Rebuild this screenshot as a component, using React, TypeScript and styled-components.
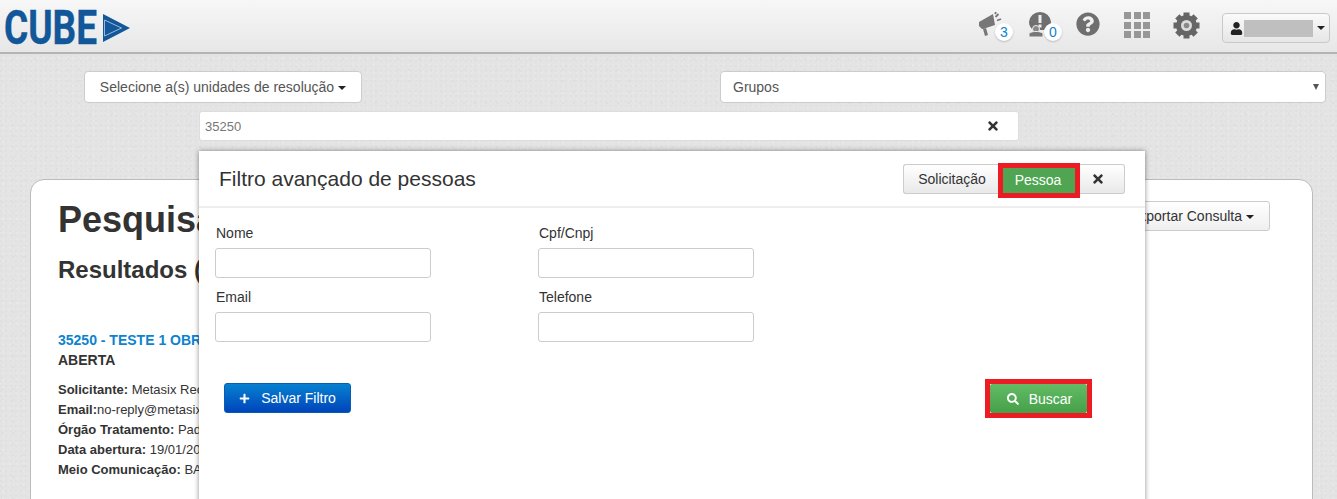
import React from 'react';
import styled, { createGlobalStyle } from 'styled-components';
import { FaPlus, FaQuestionCircle, FaSearch, FaTimes, FaUser } from 'react-icons/fa';

const GlobalStyle = createGlobalStyle`
  html, body {
    margin: 0;
    padding: 0;
    height: 100%;
    overflow: hidden;
  }
  body {
    font-family: "Liberation Sans", Arial, sans-serif;
    font-size: 14px;
    color: #333;
  }
  * { box-sizing: border-box; }
`;

const Page = styled.div`
  position: relative;
  width: 1337px;
  height: 499px;
  overflow: hidden;
  background-color: #e3e4e3;
  background-image:
    radial-gradient(circle at 1px 1px, #dfe0df 1px, transparent 1.5px),
    radial-gradient(circle at 3px 2px, #e7e8e7 1px, transparent 1.5px),
    radial-gradient(circle at 2px 4px, #dddedd 1px, transparent 1.5px);
  background-size: 5px 5px, 7px 7px, 11px 11px;
`;

const Header = styled.header`
  height: 54px;
  display: flex;
  align-items: flex-start;
  justify-content: space-between;
  padding: 0 7px 0 3px;
  background: linear-gradient(to bottom, #f7f7f7, #e7e7e7);
  border-bottom: 2px solid #b4b4b4;
`;

const Logo = styled.svg`
  display: block;
  width: 130px;
  height: 56px;
`;

const LogoWord = styled.text`
  font-family: Roboto, sans-serif;
  font-size: 48px;
  font-weight: 700;
  fill: #115799;
  stroke: #115799;
  stroke-width: 0.4px;
`;

const Tools = styled.div`
  display: flex;
  align-items: flex-start;
`;

const ToolItem = styled.div<{ $w: number }>`
  position: relative;
  width: ${(p) => p.$w}px;
  height: 44px;
  padding-top: 12px;
  color: #6f6f6f;
  font-size: 24px;
  line-height: 0;
`;

const Bubble = styled.span<{ $left: number }>`
  position: absolute;
  left: ${(p) => p.$left}px;
  top: 23px;
  width: 18px;
  height: 18px;
  border-radius: 50%;
  background: #fff;
  color: #0d83cf;
  font-size: 14px;
  line-height: 19px;
  text-align: center;
  box-shadow: 0 1px 2px rgba(0, 0, 0, 0.2);
`;

const AppGrid = styled.div`
  display: grid;
  grid-template-columns: repeat(3, 7px);
  grid-auto-rows: 7px;
  gap: 2.5px;
`;

const AppCell = styled.span`
  background: #979797;
`;

const UserButton = styled.div`
  display: flex;
  align-items: center;
  width: 108px;
  height: 30px;
  margin-top: 13px;
  padding-left: 7px;
  border: 1px solid #c9c9c9;
  border-radius: 4px;
  background: linear-gradient(to bottom, #fafafa, #e6e6e6);
  color: #222;
  font-size: 13px;
`;

const BlankName = styled.span`
  width: 69px;
  height: 17px;
  margin-left: 1px;
  background: #bfbfbf;
`;

const Caret = styled.span<{ $gap?: number }>`
  display: inline-block;
  width: 0;
  height: 0;
  margin-left: ${(p) => p.$gap ?? 4}px;
  vertical-align: middle;
  border-top: 4px solid #222;
  border-left: 4px solid transparent;
  border-right: 4px solid transparent;
`;

const FilterRow = styled.div`
  display: flex;
  justify-content: space-between;
  padding: 17px 11px 0 84px;
`;

const UnitButton = styled.div`
  width: 278px;
  height: 32px;
  border: 1px solid #ccc;
  border-radius: 4px;
  background: #fff;
  color: #555;
  font-size: 14px;
  line-height: 30px;
  text-align: center;
`;

const GroupSelect = styled.div`
  display: flex;
  align-items: center;
  justify-content: space-between;
  width: 606px;
  height: 32px;
  padding: 0 6px 0 12px;
  border: 1px solid #ccc;
  border-radius: 4px;
  background: #fff;
  color: #555;
  font-size: 14px;
`;

const SmallArrow = styled.span`
  width: 0;
  height: 0;
  border-top: 6px solid #555;
  border-left: 3px solid transparent;
  border-right: 3px solid transparent;
`;

const SearchBox = styled.div`
  display: flex;
  align-items: center;
  justify-content: space-between;
  width: 820px;
  height: 30px;
  margin: 8px 0 0 199px;
  padding: 0 18px 0 5px;
  border: 1px solid #ddd;
  border-radius: 3px;
  background: #fff;
  color: #777;
  font-size: 13px;
`;

const CloseGlyph = styled(FaTimes)`
  color: #333;
  font-size: 14px;
`;

const Card = styled.main`
  height: 340px;
  margin: 38px 24px 0 30px;
  padding: 22px 42px 0 27px;
  background: #fff;
  border: 1px solid #bbb;
  border-radius: 14px;
`;

const TitleRow = styled.div`
  display: flex;
  align-items: flex-start;
  justify-content: space-between;
`;

const PageTitle = styled.h1`
  margin: 0;
  font-size: 36px;
  line-height: 36px;
  font-weight: 700;
  color: #333;
`;

const ExportButton = styled.div`
  width: 170px;
  height: 30px;
  margin-top: -1px;
  padding-right: 15px;
  border: 1px solid #ccc;
  border-radius: 3px;
  background: linear-gradient(to bottom, #fff, #efefef);
  color: #333;
  font-size: 14px;
  line-height: 28px;
  text-align: right;
`;

const Results = styled.h2`
  margin: 19px 0 0;
  font-size: 24px;
  line-height: 26px;
  font-weight: 700;
  color: #333;
`;

const ItemLink = styled.a`
  display: block;
  margin-top: 47px;
  color: #0d83cf;
  font-size: 14px;
  line-height: 20px;
  font-weight: 700;
  white-space: nowrap;
`;

const ItemStatus = styled.div`
  margin-bottom: 10px;
  color: #333;
  font-size: 14px;
  line-height: 20px;
  font-weight: 700;
`;

const ItemLine = styled.div`
  color: #333;
  font-size: 13px;
  line-height: 20px;
  white-space: nowrap;
`;

const Modal = styled.section`
  position: absolute;
  top: 151px;
  left: 199px;
  width: 946px;
  height: 360px;
  background: #fff;
  box-shadow: 0 0 5px rgba(0, 0, 0, 0.45);
`;

const ModalHeader = styled.div`
  display: flex;
  align-items: center;
  justify-content: space-between;
  height: 57px;
  padding: 0 20px;
  border-bottom: 2px solid #eee;
`;

const ModalTitle = styled.h3`
  margin: 1px 0 0;
  font-size: 21px;
  font-weight: 400;
  color: #333;
`;

const ModeGroup = styled.div`
  display: flex;
  height: 30px;
`;

const ModeButton = styled.div<{ $w: number; $side?: 'left' | 'right' }>`
  display: flex;
  align-items: center;
  justify-content: center;
  width: ${(p) => p.$w}px;
  padding-left: ${(p) => (p.$side === 'left' ? 2 : 0)}px;
  padding-right: ${(p) => (p.$side === 'right' ? 8 : 0)}px;
  border: 1px solid #ccc;
  border-left-width: ${(p) => (p.$side === 'right' ? 0 : 1)}px;
  border-right-width: ${(p) => (p.$side === 'left' ? 0 : 1)}px;
  border-radius: ${(p) => (p.$side === 'left' ? '3px 0 0 3px' : '0 3px 3px 0')};
  background: linear-gradient(to bottom, #fff, #e9e9e9);
  color: #333;
  font-size: 14px;
`;

const ActiveMode = styled.div`
  display: flex;
  align-items: center;
  justify-content: center;
  width: 82px;
  height: 35px;
  margin-top: -1px;
  padding-right: 2px;
  border: 5px solid #ed1c24;
  background: #4fa551;
  color: #fff;
  font-size: 14px;
`;

const FormGrid = styled.div`
  display: grid;
  grid-template-columns: 216px 216px;
  column-gap: 107px;
  row-gap: 10px;
  padding: 16px 0 0 16px;
`;

const Field = styled.div`
  display: flex;
  flex-direction: column;
`;

const FieldLabel = styled.label`
  margin-left: 1px;
  margin-bottom: 5px;
  color: #333;
  font-size: 14px;
  line-height: 19px;
`;

const FieldInput = styled.input`
  width: 216px;
  height: 30px;
  border: 1px solid #ccc;
  border-radius: 3px;
  background: #fff;
`;

const ModalFooter = styled.div`
  display: flex;
  align-items: flex-start;
  justify-content: space-between;
  margin-top: 37px;
  padding: 0 53px 0 25px;
`;

const SaveButton = styled.div`
  display: flex;
  align-items: center;
  justify-content: center;
  gap: 11px;
  width: 127px;
  height: 30px;
  margin-top: 4px;
  border: 1px solid #0a5cb0;
  border-radius: 3px;
  background: linear-gradient(to bottom, #0681d0, #0045bb);
  color: #fff;
  font-size: 14px;
`;

const SearchFrame = styled.div`
  width: 107px;
  height: 39px;
  border: 5px solid #ed1c24;
`;

const SearchButton = styled.div`
  display: flex;
  align-items: center;
  justify-content: center;
  gap: 10px;
  height: 29px;
  padding-left: 2px;
  border-radius: 2px;
  background: linear-gradient(to bottom, #63bc65, #45a049);
  color: #fff;
  font-size: 14px;
`;

const MegaphoneIcon: React.FC = () => (
  <svg width="24" height="25" viewBox="0 0 24 25" fill="#777">
    <path d="M1 10l14-8 2 11-12 4-1 0-3-3z" />
    <path d="M5 17l3-1 2 7-3 1z" />
    <path d="M17.5 5l3-3M19 8.500l4-1.500M17 2l1-2" stroke="#777" strokeWidth="1.800" fill="none" />
  </svg>
);

const ReportIcon: React.FC = () => (
  <svg width="24" height="25" viewBox="0 0 24 25">
    <path d="M12 0a11 11 0 0 1 11 10c0 4-2 6-4 8H5c-2-2-4-4-4-8A11 11 0 0 1 12 0z" fill="#6f6f6f" />
    <rect x="10.500" y="3" width="3" height="8" fill="#eee" />
    <rect x="10.500" y="12.500" width="3" height="3" fill="#eee" />
    <circle cx="8" cy="17" r="3.500" fill="#888" stroke="#eee" />
    <path d="M1 25v-3c0-1.500 3-2.500 7-2.500s7 1 7 2.500v3z" fill="#777" stroke="#eee" />
  </svg>
);

const GearIcon: React.FC = () => (
  <svg width="27" height="27" viewBox="0 0 27 27">
    {[0, 45, 90, 135, 180, 225, 270, 315].map((a) => (
      <rect key={a} x="10.500" y="0.500" width="6" height="6" fill="#666" transform={`rotate(${a} 13.500 13.500)`} />
    ))}
    <circle cx="13.500" cy="13.500" r="8" fill="#dcdcdc" stroke="#666" strokeWidth="5" />
    <circle cx="13.500" cy="13.500" r="2.800" fill="#8a8a8a" />
  </svg>
);

const App: React.FC = () => {
  return (
    <Page>
      <GlobalStyle />
      <Header>
        <Logo viewBox="0 0 130 56">
          <LogoWord x="1" y="44" textLength="93" lengthAdjust="spacingAndGlyphs">
            CUBE
          </LogoWord>
          <path d="M100 14l27 14-27 14z" fill="#115799" />
          <path d="M101.500 20l17 8-17 8z" fill="none" stroke="#9db8d6" strokeWidth="1" />
        </Logo>
        <Tools>
          <ToolItem $w={50}>
            <MegaphoneIcon />
            <Bubble $left={17}>3</Bubble>
          </ToolItem>
          <ToolItem $w={48}>
            <ReportIcon />
            <Bubble $left={16}>0</Bubble>
          </ToolItem>
          <ToolItem $w={48}>
            <FaQuestionCircle />
          </ToolItem>
          <ToolItem $w={49}>
            <AppGrid>
              {Array.from({ length: 9 }).map((_, i) => (
                <AppCell key={i} />
              ))}
            </AppGrid>
          </ToolItem>
          <ToolItem $w={49}>
            <GearIcon />
          </ToolItem>
          <UserButton>
            <FaUser />
            <BlankName />
            <Caret $gap={4} />
          </UserButton>
        </Tools>
      </Header>

      <FilterRow>
        <UnitButton>
          Selecione a(s) unidades de resolução
          <Caret />
        </UnitButton>
        <GroupSelect>
          Grupos
          <SmallArrow />
        </GroupSelect>
      </FilterRow>

      <SearchBox>
        35250
        <CloseGlyph />
      </SearchBox>

      <Card>
        <TitleRow>
          <PageTitle>Pesquisa</PageTitle>
          <ExportButton>
            Exportar Consulta
            <Caret />
          </ExportButton>
        </TitleRow>
        <Results>Resultados (1)</Results>
        <ItemLink>35250 - TESTE 1 OBRA</ItemLink>
        <ItemStatus>ABERTA</ItemStatus>
        <ItemLine>
          <b>Solicitante:</b> Metasix Recursos
        </ItemLine>
        <ItemLine>
          <b>Email:</b>no-reply@metasix.com.br
        </ItemLine>
        <ItemLine>
          <b>Órgão Tratamento:</b> Padrão
        </ItemLine>
        <ItemLine>
          <b>Data abertura:</b> 19/01/2018
        </ItemLine>
        <ItemLine>
          <b>Meio Comunicação:</b> BALCÃO
        </ItemLine>
      </Card>

      <Modal>
        <ModalHeader>
          <ModalTitle>Filtro avançado de pessoas</ModalTitle>
          <ModeGroup>
            <ModeButton $w={95} $side="left">
              Solicitação
            </ModeButton>
            <ActiveMode>Pessoa</ActiveMode>
            <ModeButton $w={45} $side="right">
              <CloseGlyph />
            </ModeButton>
          </ModeGroup>
        </ModalHeader>
        <FormGrid>
          <Field>
            <FieldLabel>Nome</FieldLabel>
            <FieldInput />
          </Field>
          <Field>
            <FieldLabel>Cpf/Cnpj</FieldLabel>
            <FieldInput />
          </Field>
          <Field>
            <FieldLabel>Email</FieldLabel>
            <FieldInput />
          </Field>
          <Field>
            <FieldLabel>Telefone</FieldLabel>
            <FieldInput />
          </Field>
        </FormGrid>
        <ModalFooter>
          <SaveButton>
            <FaPlus size={11} />
            Salvar Filtro
          </SaveButton>
          <SearchFrame>
            <SearchButton>
              <FaSearch size={12} />
              Buscar
            </SearchButton>
          </SearchFrame>
        </ModalFooter>
      </Modal>
    </Page>
  );
};

export default App;
